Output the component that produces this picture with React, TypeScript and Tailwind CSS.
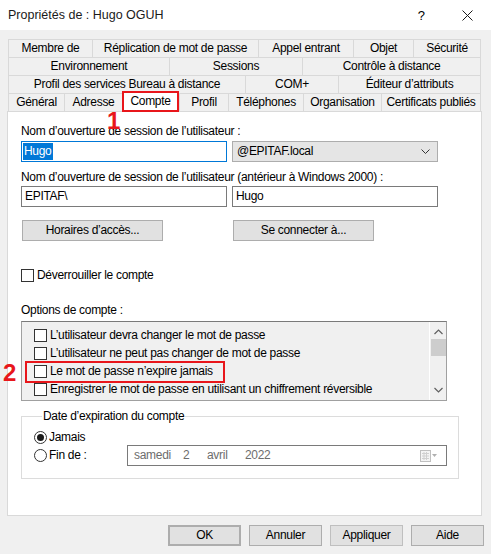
import React from "react";

const tabRows: { label: string; w: string }[][] = [
  [
    { label: "Membre de", w: "w-[84px]" },
    { label: "Réplication de mot de passe", w: "w-[166px]" },
    { label: "Appel entrant", w: "w-[95px]" },
    { label: "Objet", w: "w-[60px]" },
    { label: "Sécurité", w: "w-[68px]" },
  ],
  [
    { label: "Environnement", w: "w-[161px]" },
    { label: "Sessions", w: "w-[133px]" },
    { label: "Contrôle à distance", w: "w-[179px]" },
  ],
  [
    { label: "Profil des services Bureau à distance", w: "w-[237px]" },
    { label: "COM+", w: "w-[93px]" },
    { label: "Éditeur d’attributs", w: "w-[143px]" },
  ],
];

const bottomTabs = [
  { label: "Général", w: "w-[56px]" },
  { label: "Adresse", w: "w-[58px]" },
  { label: "Compte", w: "w-[57px]", active: true },
  { label: "Profil", w: "w-[49px]" },
  { label: "Téléphones", w: "w-[75px]" },
  { label: "Organisation", w: "w-[78px]" },
  { label: "Certificats publiés", w: "w-[100px]" },
];

const options = [
  "L’utilisateur devra changer le mot de passe",
  "L’utilisateur ne peut pas changer de mot de passe",
  "Le mot de passe n’expire jamais",
  "Enregistrer le mot de passe en utilisant un chiffrement réversible",
];

function Checkbox() {
  return <span className="inline-block w-[13px] h-[13px] shrink-0 bg-white border border-[#333333]" />;
}

function Radio({ checked }: { checked?: boolean }) {
  return (
    <span className="w-[13px] h-[13px] shrink-0 rounded-full bg-white border border-[#333333] flex items-center justify-center">
      {checked && <span className="w-[7px] h-[7px] rounded-full bg-[#1a1a1a]" />}
    </span>
  );
}

function Button({ children, className = "" }: { children: React.ReactNode; className?: string }) {
  return (
    <div
      className={
        "h-[21px] flex items-center justify-center bg-[#e1e1e1] border border-[#adadad] text-black " + className
      }
    >
      {children}
    </div>
  );
}

export default function App() {
  return (
    <div className="w-[491px] h-[554px] bg-[#f0f0f0] text-[12px] leading-[15px] tracking-[-0.3px] text-black [font-family:'Liberation_Sans',Arial,sans-serif] overflow-hidden relative">
      {/* title bar */}
      <div className="h-[30px] bg-white flex items-center pl-[8px] tracking-normal">
        <span className="text-[12.5px] text-[#1a1a1a]">Propriétés de : Hugo OGUH</span>
        <span className="ml-auto mr-[37px] text-[13px]">?</span>
        <svg width="11" height="11" viewBox="0 0 11 11" className="mr-[18px]">
          <path d="M0.5 0.5 L10.5 10.5 M10.5 0.5 L0.5 10.5" stroke="#1a1a1a" strokeWidth="1" />
        </svg>
      </div>

      {/* tabs */}
      <div className="ml-[8px] mt-[9px] w-[473px]">
        {tabRows.map((row, i) => (
          <div key={i} className="flex h-[18px]">
            {row.map((t, j) => (
              <div
                key={t.label}
                className={
                  t.w +
                  " flex items-center justify-center border-t border-l border-[#d9d9d9] " +
                  (j === row.length - 1 ? "border-r" : "")
                }
              >
                {t.label}
              </div>
            ))}
          </div>
        ))}
        <div className="flex h-[18px] items-end">
          {bottomTabs.map((t, j) =>
            t.active ? (
              <div
                key={t.label}
                className={
                  t.w +
                  " relative z-10 h-[21px] -mb-[1px] bg-white border-2 border-[#e8161b] flex items-start justify-center pt-[1px]"
                }
              >
                {t.label}
              </div>
            ) : (
              <div
                key={t.label}
                className={
                  t.w +
                  " h-[18px] flex items-center justify-center border-t border-l border-[#d9d9d9] " +
                  (j === bottomTabs.length - 1 ? "border-r" : "")
                }
              >
                {t.label}
              </div>
            )
          )}
        </div>
      </div>

      {/* panel */}
      <div className="ml-[7px] w-[475px] h-[405px] bg-white border border-[#d9d9d9] pl-[13px] flex flex-col">
        <div className="mt-[12px]">Nom d’ouverture de session de l’utilisateur :</div>
        <div className="mt-[2px] flex gap-[5px]">
          <div className="w-[206px] h-[21px] border border-[#0078d7] flex items-center pl-[1px]">
            <span className="bg-[#0078d7] text-white h-[17px] leading-[17px] px-[1px]">Hugo</span>
          </div>
          <div className="w-[206px] h-[21px] border border-[#adadad] bg-[#e5e5e5] flex items-center pl-[4px] pr-[7px]">
            <span>@EPITAF.local</span>
            <svg width="9" height="6" viewBox="0 0 9 6" className="ml-auto">
              <path d="M0.5 0.5 L4.5 4.5 L8.5 0.5" fill="none" stroke="#333" strokeWidth="1" />
            </svg>
          </div>
        </div>

        <div className="mt-[8px]">Nom d’ouverture de session de l’utilisateur (antérieur à Windows 2000) :</div>
        <div className="mt-[1px] flex gap-[5px]">
          <div className="w-[206px] h-[21px] border border-[#7a7a7a] flex items-center pl-[3px]">EPITAF\</div>
          <div className="w-[206px] h-[21px] border border-[#7a7a7a] flex items-center pl-[3px]">Hugo</div>
        </div>

        <div className="mt-[13px] ml-[1px] flex gap-[70px]">
          <Button className="w-[141px]">Horaires d’accès...</Button>
          <Button className="w-[141px]">Se connecter à...</Button>
        </div>

        <div className="mt-[27px] flex items-center gap-[3px] h-[15px]">
          <Checkbox />
          <span>Déverrouiller le compte</span>
        </div>

        <div className="mt-[20px]">Options de compte :</div>
        <div className="relative mt-[3px] w-[426px] h-[80px] border border-[#a0a0a0] border-t-[#7a7a7a] bg-[#f0f0f0] flex">
          <div className="flex-1 pt-[4px] pl-[12px]">
            {options.map((o) => (
              <div key={o} className="h-[18px] flex items-center gap-[3px]">
                <Checkbox />
                <span>{o}</span>
              </div>
            ))}
          </div>
          <div className="w-[17px] h-full bg-[#f0f0f0] border-l border-white flex flex-col items-center">
            <svg width="9" height="6" viewBox="0 0 9 6" className="mt-[7px]">
              <path d="M0.5 5 L4.5 1 L8.5 5" fill="none" stroke="#606060" strokeWidth="1.2" />
            </svg>
            <div className="mt-[4px] w-[15px] h-[17px] bg-[#cdcdcd]" />
            <svg width="9" height="6" viewBox="0 0 9 6" className="mt-auto mb-[7px]">
              <path d="M0.5 1 L4.5 5 L8.5 1" fill="none" stroke="#606060" strokeWidth="1.2" />
            </svg>
          </div>
          {/* annotation 2 */}
          <div className="absolute left-[3px] top-[39px] w-[200px] h-[22px] border-2 border-[#e8161b]" />
          <span className="absolute -left-[19px] top-[39px] text-[24px] leading-[24px] font-bold tracking-normal text-[#e8161b]">2</span>
        </div>

        <fieldset className="mt-[8px] w-[438px] border border-[#dcdcdc] pl-[12px] pb-[12px]">
          <legend className="ml-[8px] px-[1px]">Date d’expiration du compte</legend>
          <div className="mt-[6px] flex items-center gap-[2px] h-[15px]">
            <Radio checked />
            <span>Jamais</span>
          </div>
          <div className="flex items-center h-[21px]">
            <Radio />
            <span className="ml-[2px] w-[78px]">Fin de :</span>
            <div className="w-[320px] h-[21px] border border-[#7a7a7a] flex items-center pl-[6px] pr-[8px] text-[#6d6d6d]">
              <span className="w-[49px]">samedi</span>
              <span className="w-[24px]">2</span>
              <span className="w-[38px]">avril</span>
              <span>2022</span>
              <svg width="18" height="12" viewBox="0 0 18 12" className="ml-auto">
                <rect x="0.5" y="0.5" width="10" height="11" fill="#f4f4f4" stroke="#c0c0c0" />
                <path d="M2 3.5 H9 M2 6 H9 M2 8.5 H9 M4 2 V10 M6.5 2 V10" stroke="#d0d0d0" strokeWidth="1" />
                <path d="M12 4 L17 4 L14.5 7 Z" fill="#b0b0b0" />
              </svg>
            </div>
          </div>
        </fieldset>
      </div>

      {/* bottom buttons */}
      <div className="mt-[9px] ml-[168px] flex gap-[8px]">
        <Button className="w-[73px] border-2 border-[#0078d7]">OK</Button>
        <Button className="w-[73px]">Annuler</Button>
        <Button className="w-[73px] bg-[#cccccc] border-[#bfbfbf] text-[#838383]">Appliquer</Button>
        <Button className="w-[73px]">Aide</Button>
      </div>

      {/* annotation 1 */}
      <span className="absolute left-[107px] top-[109px] z-20 text-[24px] leading-[24px] font-bold text-[#e8161b]">1</span>
    </div>
  );
}
